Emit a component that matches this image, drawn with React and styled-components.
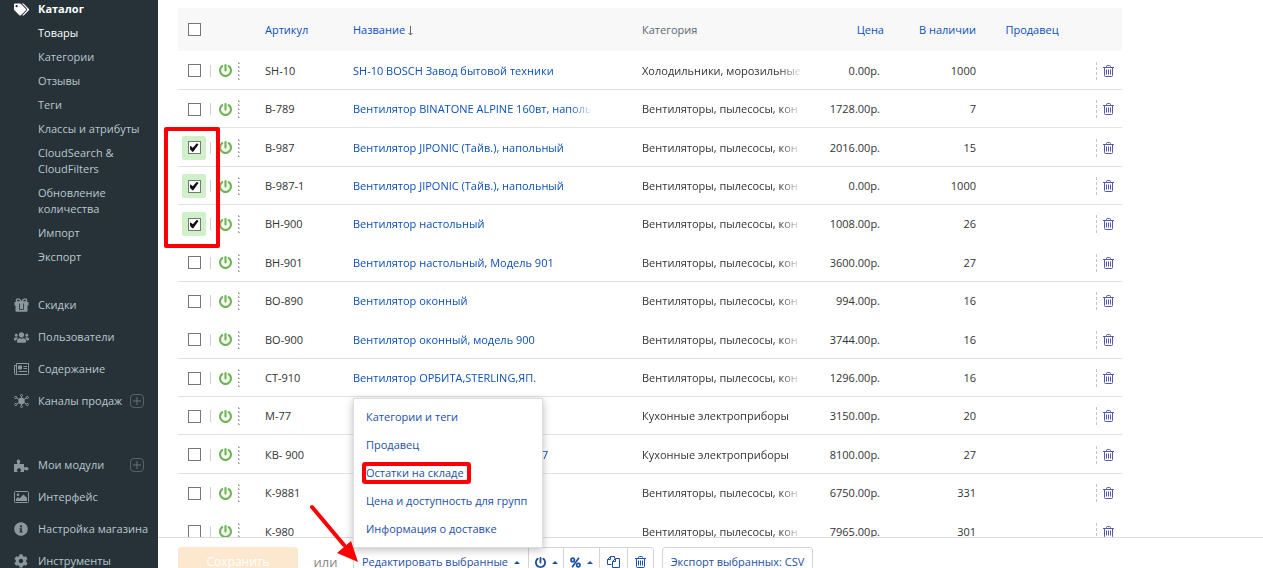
import React from "react";
import styled, { createGlobalStyle, css } from "styled-components";
import { FaTags, FaUsers, FaInfoCircle, FaCog } from "react-icons/fa";

const Global = createGlobalStyle`
  *, *::before, *::after { box-sizing: border-box; }
  body { margin: 0; background: #fff; font: 11px/16px "Open Sans", "Noto Sans", sans-serif; color: #333; }
  a { color: inherit; text-decoration: none; }
  button { font: inherit; color: inherit; cursor: pointer; }
`;

const Page = styled.div`
  display: grid;
  grid-template-columns: 158px minmax(0, 1fr);
  height: 100vh;
  overflow: hidden;
`;

const Sidebar = styled.nav`
  background: #263238;
  color: #b9c7cf;
  min-height: 0;
  overflow: hidden;
`;

const MenuList = styled.ul`
  list-style: none;
  margin: 0;
  padding: 0;
`;

const TopMenu = styled(MenuList)`
  margin-top: ${(p) => p.$gap}px;
`;

const SubItem = styled.li`
  padding: 4px 16px 4px 38px;
  color: ${(p) => (p.$active ? "#fff" : "inherit")};
`;

const Section = styled.div`
  display: flex;
  align-items: center;
  padding: 1px 0 4px 14px;
  color: #fff;
  font-weight: 700;
`;

const MenuItem = styled.li`
  display: flex;
  align-items: center;
  height: 32px;
  padding: 0 14px;
`;

const IconSlot = styled.span`
  display: flex;
  flex: none;
  width: 24px;
  color: ${(p) => (p.$bright ? "#fff" : "#8a979d")};
  svg { display: block; }
`;

const MenuLink = styled.a`
  white-space: nowrap;
`;

const AddButton = styled.button`
  display: flex;
  align-items: center;
  justify-content: center;
  width: 14px;
  height: 14px;
  margin-left: auto;
  padding: 0;
  background: none;
  border: 1px solid #56636a;
  border-radius: 4px;
  color: #66737a;
`;

const Main = styled.main`
  position: relative;
  display: flex;
  flex-direction: column;
  min-width: 0;
  min-height: 0;
`;

const ListArea = styled.div`
  flex: 1;
  min-height: 0;
  overflow: hidden;
  padding: 8px 141px 0 20px;
`;

const Table = styled.table`
  width: 100%;
  table-layout: fixed;
  border-collapse: collapse;
`;

const HeadRow = styled.tr`
  height: 43px;
  background: #f8f8f8;
`;

const Row = styled.tr`
  height: 38px;
  box-shadow: ${(p) => (p.$plain ? "none" : "inset 0 -1px #e3e3e3")};
  &:nth-child(5n + 1), &:nth-child(5n + 3) { height: 39px; }
`;

const blue = "#0b50b8";

const cell = css`
  padding: 0 ${(p) => p.$right || 0}px 0 0;
  text-align: ${(p) => p.$align || "left"};
  font-weight: 400;
  white-space: nowrap;
  vertical-align: middle;
`;

const Th = styled.th`
  ${cell}
  color: ${(p) => (p.$muted ? "#596773" : blue)};
`;

const Td = styled.td`
  ${cell}
`;

const Arrow = styled.svg`
  margin-left: 3px;
  vertical-align: -2px;
`;

const Clip = styled.div`
  width: ${(p) => p.$width}px;
  overflow: hidden;
  mask-image: linear-gradient(to right, #000 calc(100% - 22px), transparent);
`;

const NameLink = styled.a`
  display: inline-block;
  padding-left: ${(p) => (p.$tail ? 189 : 0)}px;
  color: ${blue};
`;

const Actions = styled.div`
  display: flex;
  align-items: center;
  height: 24px;
  padding-left: 4px;
`;

const TickSlot = styled.label`
  display: flex;
  align-items: center;
  justify-content: center;
  width: 24px;
  height: 24px;
  border-radius: 2px;
  background: ${(p) => (p.$on ? "#cff0c8" : "transparent")};
`;

const Tick = styled.input`
  appearance: none;
  display: block;
  width: 13px;
  height: 13px;
  margin: 0;
  border: 1px solid #777;
  background: #fff;
  &:checked::before {
    content: "";
    display: block;
    width: 9px;
    height: 9px;
    margin: 1px;
    background: #111;
    clip-path: polygon(0 42%, 14% 32%, 36% 54%, 82% 4%, 100% 16%, 42% 98%, 30% 98%, 0 62%);
  }
`;

const Bar = styled.span`
  width: 1px;
  height: 12px;
  margin: 0 8px 0 4px;
  background: #d0d0d0;
`;

const PowerButton = styled.button`
  display: flex;
  padding: 0;
  border: 0;
  background: none;
  color: #6db555;
`;

const Grip = styled.span`
  width: 2px;
  height: 18px;
  margin-left: 6px;
  background:
    repeating-linear-gradient(#a8a8a8 0 2px, transparent 2px 4px) 0 0 / 1px 100% no-repeat,
    repeating-linear-gradient(transparent 0 1px, #b8b8b8 1px 2px, transparent 2px 4px) 1px 0 / 1px 100% no-repeat;
`;

const RemoveCell = styled.div`
  display: flex;
  align-items: center;
  height: 18px;
  padding-left: 6px;
  border-left: 1px dashed #c4c4d0;
`;

const PlainButton = styled.button`
  display: flex;
  padding: 0;
  border: 0;
  background: none;
  color: #5557a8;
`;

const Footer = styled.footer`
  display: flex;
  flex: none;
  align-items: flex-start;
  height: 31px;
  padding: 9px 20px 0;
  border-top: 1px solid #dcdcdc;
`;

const SaveButton = styled.button`
  width: 120px;
  height: 30px;
  border: 0;
  border-radius: 3px;
  background: #fbe8cf;
  color: #fff;
  font-size: 12px;
`;

const Or = styled.span`
  width: 55px;
  text-align: center;
  font-size: 13px;
  line-height: 30px;
  color: #888;
`;

const Group = styled.div`
  position: relative;
  display: flex;
  height: 30px;
  margin-right: 8px;
  border: 1px solid #d4d4d4;
  border-radius: 3px;
  color: #1c50a4;
`;

const ToolButton = styled.button`
  display: flex;
  align-items: center;
  justify-content: center;
  gap: 6px;
  width: ${(p) => p.$width}px;
  padding: 0;
  border: 0;
  background: none;
  white-space: nowrap;
  & + & { border-left: 1px solid #d4d4d4; }
`;

const Caret = styled.span`
  border: 3px solid transparent;
  border-top: 0;
  border-bottom: 3px solid currentColor;
`;

const Popup = styled(MenuList)`
  position: absolute;
  left: -1px;
  bottom: 28px;
  width: 190px;
  padding: 4px 0;
  background: #fff;
  border: 1px solid #ddd;
  box-shadow: 0 2px 8px rgba(0, 0, 0, 0.25);
`;

const PopupItem = styled.li`
  display: flex;
  align-items: center;
  height: 28px;
  padding-left: 12px;
`;

const PopupLink = styled.a`
  padding-right: 3px;
  line-height: 14px;
  white-space: nowrap;
  border-radius: 1px;
  box-shadow: ${(p) => (p.$marked ? "0 0 0 4px #fd0006" : "none")};
`;

const MarkFrame = styled.div`
  position: absolute;
  left: 6px;
  top: 127px;
  width: 56px;
  height: 121px;
  border: 4px solid #fd0006;
  border-radius: 2px;
  pointer-events: none;
`;

const Pointer = styled.svg`
  position: absolute;
  left: -46px;
  bottom: 11px;
  pointer-events: none;
`;

function PowerIcon({ size }) {
  return (
    <svg width={size} height={size} viewBox="0 0 1536 1536" fill="currentColor">
      <path d="M1536 768q0 156-61 298t-164 245-245 164-298 61-298-61-245-164-164-245-61-298q0-182 80.500-343t226.500-270q43-32 95.500-25t83.500 50q32 42 24.500 94.500t-49.500 84.500q-98 74-151.500 181t-53.500 228q0 104 40.500 198.500t109.500 163.500 163.500 109.500 198.500 40.500 198.500-40.500 163.500-109.500 109.500-163.500 40.500-198.500q0-121-53.500-228t-151.500-181q-42-32-49.500-84.500t24.500-94.500q31-43 84-50t95 25q146 109 226.500 270t80.500 343zm-640-640v640q0 52-38 90t-90 38-90-38-38-90v-640q0-52 38-90t90-38 90 38 38 90z" />
    </svg>
  );
}

function PercentIcon() {
  return (
    <svg width="11" height="11" viewBox="0 0 11 11" fill="none" stroke="currentColor" strokeWidth="1.7">
      <circle cx="2.700" cy="2.900" r="1.700" />
      <circle cx="8.300" cy="8.100" r="1.700" />
      <path d="M9 .8L2 10.200" />
    </svg>
  );
}

function GiftIcon() {
  return (
    <svg width="15" height="14" viewBox="0 0 15 14">
      <path d="M7.500 4C6 1.200 5 .9 4 .9S2.300 1.700 2.300 2.500 3 4 4 4zM7.500 4C9 1.200 10 .9 11 .9s1.700.8 1.700 1.600S12 4 11 4z" fill="none" stroke="currentColor" strokeWidth="1.400" />
      <path d="M.5 4h14v3.500h-1V13q0 .8-.8.8H2.300q-.8 0-.8-.8V7.500h-1z" fill="currentColor" />
      <path d="M5.500 5.500v6h4v-6" fill="none" stroke="#263238" strokeWidth=".8" />
    </svg>
  );
}

function NewsIcon() {
  return (
    <svg width="15" height="12" viewBox="0 0 15 12" fill="none" stroke="currentColor">
      <path d="M2.500 .5h12v10q0 1-1 1h-12q-1 0-1-1v-8h2M2.500 .5v9.500q0 1.500-1 1.500M9.500 3.500h3.500M9.500 5.500h3.500M4.500 8.500H13" />
      <path d="M4.500 3h3v3h-3z" fill="currentColor" />
    </svg>
  );
}

function PictureIcon() {
  return (
    <svg width="15" height="12" viewBox="0 0 15 12">
      <rect x=".5" y=".5" width="14" height="11" rx="1" fill="none" stroke="currentColor" />
      <circle cx="4" cy="3.800" r="1.300" fill="currentColor" />
      <path d="M2 10V8l2-2 1.500 1.500L9.500 3.500 13 7v3z" fill="currentColor" />
    </svg>
  );
}

function HubIcon() {
  return (
    <svg width="15" height="14" viewBox="0 0 15 14" fill="none" stroke="currentColor">
      <circle cx="7.500" cy="7" r="3.200" fill="currentColor" stroke="none" />
      <path d="M7.500 2.500v9M3 4.200l9 5.600M12 4.200L3 9.800" />
      <circle cx="7.500" cy="1.500" r="1" />
      <circle cx="7.500" cy="12.500" r="1" />
      <circle cx="1.700" cy="3.500" r="1.100" />
      <circle cx="13.300" cy="3.500" r="1.100" />
      <circle cx="1.700" cy="10.500" r="1.100" />
      <circle cx="13.300" cy="10.500" r="1.100" />
    </svg>
  );
}

function ModuleIcon() {
  return (
    <svg width="15" height="13" viewBox="0 0 15 13" fill="currentColor">
      <path d="M0 5h3.600C2.500 3.300 2.300 1 4.500.6 6.800 1 6.400 3.300 5.500 5H10v3.400c.8.300 1.600-.3 2.500-.4 1.200 0 2 .7 2 1.800 0 1-.8 1.700-1.800 1.700-1 0-1.700-.8-2.700-.6V13H6.300c-.1-.9.700-1.200.7-2.200 0-1-.9-1.600-2-1.600s-2 .6-2 1.600c0 1 .7 1.300.6 2.200H0z" />
    </svg>
  );
}

function TrashIcon() {
  return (
    <svg width="11" height="12" viewBox="0 0 11 12" fill="none" stroke="currentColor">
      <path d="M0 2.500h11M3.500 2.500v-1q0-1 1-1h2q1 0 1 1v1M1.500 2.500v8q0 1 1 1h6q1 0 1-1v-8M3.500 4.500v5M5.500 4.500v5M7.500 4.500v5" />
    </svg>
  );
}

function CopyIcon() {
  return (
    <svg width="13" height="12" viewBox="0 0 13 12" fill="none" stroke="currentColor">
      <path d="M4.500 8.500h-4v-5l3-3h4v2M3.500 .5v3h-3M5.500 5.500l3-3h4v9h-7v-6h3v-3" />
    </svg>
  );
}

const catalog = [
  "Товары", "Категории", "Отзывы", "Теги", "Классы и атрибуты",
  "CloudSearch & CloudFilters", "Обновление количества", "Импорт", "Экспорт",
];

const menus = [
  {
    gap: 20,
    items: [
      { label: "Скидки", icon: <GiftIcon /> },
      { label: "Пользователи", icon: <FaUsers size={15} /> },
      { label: "Содержание", icon: <NewsIcon /> },
      { label: "Каналы продаж", icon: <HubIcon />, add: true },
    ],
  },
  {
    gap: 32,
    items: [
      { label: "Мои модули", icon: <ModuleIcon />, add: true },
      { label: "Интерфейс", icon: <PictureIcon /> },
      { label: "Настройка магазина", icon: <FaInfoCircle size={14} /> },
      { label: "Инструменты", icon: <FaCog size={14} /> },
    ],
  },
];

const fans = "Вентиляторы, пылесосы, кон";
const kitchen = "Кухонные электроприборы";

const products = [
  { sku: "SH-10", name: "SH-10 BOSCH Завод бытовой техники", cat: "Холодильники, морозильные", price: "0.00р.", qty: 1000 },
  { sku: "В-789", name: "Вентилятор BINATONE ALPINE 160вт, наполь", cat: fans, price: "1728.00р.", qty: 7 },
  { sku: "В-987", name: "Вентилятор JIPONIC (Тайв.), напольный", cat: fans, price: "2016.00р.", qty: 15, on: true },
  { sku: "В-987-1", name: "Вентилятор JIPONIC (Тайв.), напольный", cat: fans, price: "0.00р.", qty: 1000, on: true },
  { sku: "ВН-900", name: "Вентилятор настольный", cat: fans, price: "1008.00р.", qty: 26, on: true, plain: true },
  { sku: "ВН-901", name: "Вентилятор настольный, Модель 901", cat: fans, price: "3600.00р.", qty: 27 },
  { sku: "ВО-890", name: "Вентилятор оконный", cat: fans, price: "994.00р.", qty: 16, plain: true },
  { sku: "ВО-900", name: "Вентилятор оконный, модель 900", cat: fans, price: "3744.00р.", qty: 16 },
  { sku: "СТ-910", name: "Вентилятор ОРБИТА,STERLING,ЯП.", cat: fans, price: "1296.00р.", qty: 16 },
  { sku: "М-77", name: "", cat: kitchen, price: "3150.00р.", qty: 20 },
  { sku: "КВ- 900", name: "7", tail: true, cat: kitchen, price: "8100.00р.", qty: 27 },
  { sku: "К-9881", name: "", cat: fans, price: "6750.00р.", qty: 331, plain: true },
  { sku: "К-980", name: "", cat: fans, price: "7965.00р.", qty: 301 },
];

const editActions = [
  "Категории и теги", "Продавец", "Остатки на складе",
  "Цена и доступность для групп", "Информация о доставке",
];

export default function App() {
  return (
    <>
      <Global />
      <Page>
        <Sidebar>
          <Section>
            <IconSlot $bright><FaTags size={15} /></IconSlot>
            <MenuLink href="#">Каталог</MenuLink>
          </Section>
          <MenuList>
            {catalog.map((label, i) => (
              <SubItem key={label} $active={i === 0}><a href="#">{label}</a></SubItem>
            ))}
          </MenuList>
          {menus.map((menu) => (
            <TopMenu key={menu.gap} $gap={menu.gap}>
              {menu.items.map((item) => (
                <MenuItem key={item.label}>
                  <IconSlot>{item.icon}</IconSlot>
                  <MenuLink href="#">{item.label}</MenuLink>
                  {item.add && (
                    <AddButton aria-label={"Добавить: " + item.label}>
                      <svg width="8" height="8" viewBox="0 0 8 8" stroke="currentColor"><path d="M0 4h8M4 0v8" /></svg>
                    </AddButton>
                  )}
                </MenuItem>
              ))}
            </TopMenu>
          ))}
        </Sidebar>
        <Main>
          <ListArea>
            <Table>
              <colgroup>
                <col width="87" />
                <col width="88" />
                <col />
                <col width="158" />
                <col width="84" />
                <col width="92" />
                <col width="120" />
                <col width="26" />
              </colgroup>
              <thead>
                <HeadRow>
                  <Th><Actions><TickSlot><Tick type="checkbox" aria-label="Выбрать все" /></TickSlot></Actions></Th>
                  <Th><a href="#">Артикул</a></Th>
                  <Th>
                    <a href="#">Название</a>
                    <Arrow width="5" height="10" viewBox="0 0 5 10" fill="none" stroke="#666"><path d="M2.500 0v9M.5 7l2 2 2-2" /></Arrow>
                  </Th>
                  <Th $muted>Категория</Th>
                  <Th $align="right"><a href="#">Цена</a></Th>
                  <Th $align="right"><a href="#">В наличии</a></Th>
                  <Th $align="center" $right={8}><a href="#">Продавец</a></Th>
                  <Th />
                </HeadRow>
              </thead>
              <tbody>
                {products.map((p) => (
                  <Row key={p.sku} $plain={p.plain}>
                    <Td>
                      <Actions>
                        <TickSlot $on={p.on}>
                          <Tick type="checkbox" defaultChecked={p.on} aria-label={"Выбрать " + p.sku} />
                        </TickSlot>
                        <Bar />
                        <PowerButton aria-label="Включён"><PowerIcon size={13} /></PowerButton>
                        <Grip />
                      </Actions>
                    </Td>
                    <Td>{p.sku}</Td>
                    <Td><Clip $width={240}><NameLink href="#" $tail={p.tail}>{p.name}</NameLink></Clip></Td>
                    <Td><Clip $width={p.cat === kitchen ? 180 : 160}>{p.cat}</Clip></Td>
                    <Td $align="right" $right={4}>{p.price}</Td>
                    <Td $align="right">{p.qty}</Td>
                    <Td />
                    <Td>
                      <RemoveCell>
                        <PlainButton aria-label={"Удалить " + p.sku}><TrashIcon /></PlainButton>
                      </RemoveCell>
                    </Td>
                  </Row>
                ))}
              </tbody>
            </Table>
          </ListArea>
          <Footer>
            <SaveButton>Сохранить</SaveButton>
            <Or>или</Or>
            <Group>
              <ToolButton $width={174}>Редактировать выбранные<Caret /></ToolButton>
              <ToolButton $width={35} aria-label="Состояние"><PowerIcon size={11} /><Caret /></ToolButton>
              <ToolButton $width={36} aria-label="Скидка"><PercentIcon /><Caret /></ToolButton>
              <ToolButton $width={28} aria-label="Копировать"><CopyIcon /></ToolButton>
              <ToolButton $width={26} aria-label="Удалить"><TrashIcon /></ToolButton>
              <Popup>
                {editActions.map((label, i) => (
                  <PopupItem key={label}><PopupLink href="#" $marked={i === 2}>{label}</PopupLink></PopupItem>
                ))}
              </Popup>
              <Pointer width="52" height="62" viewBox="0 0 52 62">
                <path d="M4 4L36 42" stroke="#fd0006" strokeWidth="4" strokeLinecap="round" />
                <path d="M50 59L29 50L43 38Z" fill="#fd0006" />
              </Pointer>
            </Group>
            <Group>
              <ToolButton $width={149}>Экспорт выбранных: CSV</ToolButton>
            </Group>
          </Footer>
          <MarkFrame />
        </Main>
      </Page>
    </>
  );
}
